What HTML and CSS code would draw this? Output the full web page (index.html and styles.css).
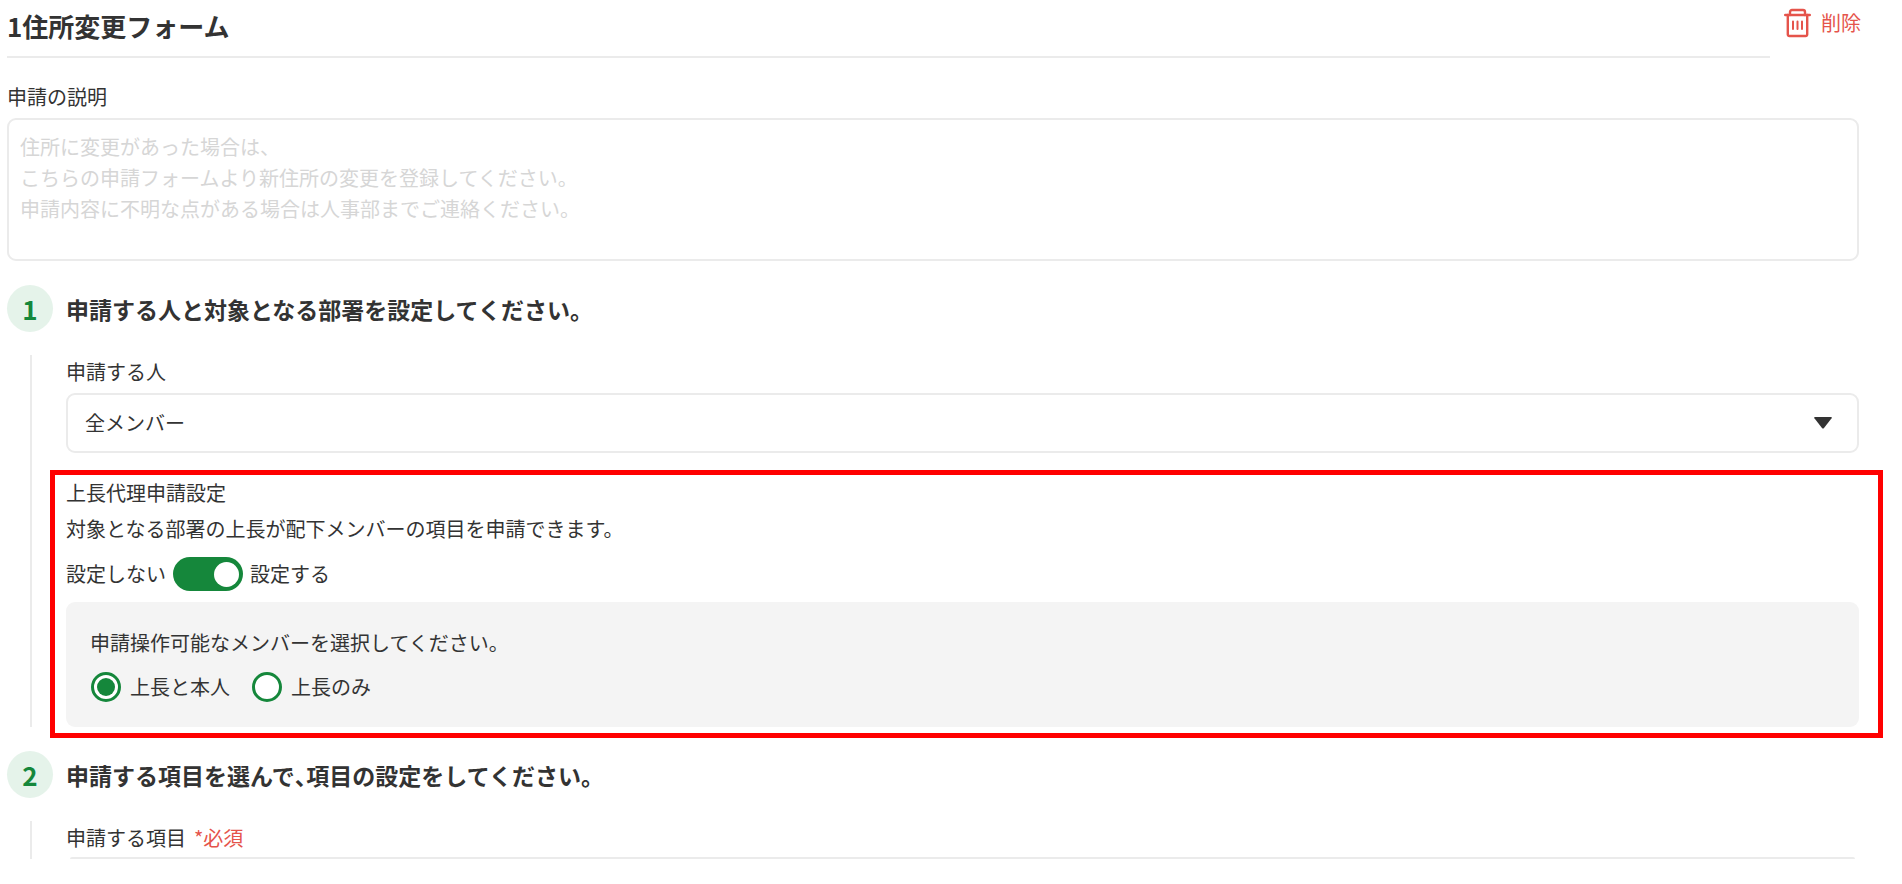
FILE: index.html
```html
<!DOCTYPE html>
<html lang="ja">
<head>
    <meta charset="UTF-8">
    <meta name="viewport" content="width=device-width, initial-scale=1.0">
    <title>住所変更フォーム</title>
    <link rel="stylesheet" href="styles.css">
</head>
<body>
    <main class="form-page">
        <header class="form-header">
            <h1 class="form-title">1住所変更フォーム</h1>
            <button type="button" class="delete-button">
                <svg class="trash-icon" width="27" height="30" viewBox="0 0 27 30" fill="none" stroke="currentColor" stroke-width="2.400" stroke-linecap="round" stroke-linejoin="round" aria-hidden="true">
                    <path d="M1.200 7h24.600"/>
                    <path d="M6 7V4a2 2 0 0 1 2-2h11a2 2 0 0 1 2 2V7"/>
                    <path d="M3.800 7v19.500a1.500 1.500 0 0 0 1.500 1.500h16.400a1.500 1.500 0 0 0 1.500-1.500V7"/>
                    <path d="M9 13.500v7.500M13.500 13.500v7.500M18 13.500v7.500" stroke-width="2"/>
                </svg>
                <span>削除</span>
            </button>
        </header>

        <div class="field">
            <label for="description">申請の説明</label>
            <textarea id="description" class="description" placeholder="住所に変更があった場合は、&#10;こちらの申請フォームより新住所の変更を登録してください。&#10;申請内容に不明な点がある場合は人事部までご連絡ください。"></textarea>
        </div>

        <section class="step">
            <div class="step-header">
                <span class="step-number">1</span>
                <h2>申請する人と対象となる部署を設定してください。</h2>
            </div>
            <div class="step-body">
                <div class="field">
                    <label for="applicant">申請する人</label>
                    <div class="select-wrap">
                        <select id="applicant">
                            <option>全メンバー</option>
                        </select>
                        <svg class="select-arrow" width="18" height="12" viewBox="0 0 18 12" aria-hidden="true">
                            <path d="M1 0h16q1.500 0 .6 1.200L10 11q-1 1.200-2 0L.4 1.200Q-.5 0 1 0z" fill="#333"/>
                        </svg>
                    </div>
                </div>

                <div class="proxy">
                    <p>上長代理申請設定</p>
                    <p>対象となる部署の上長が配下メンバーの項目を申請できます。</p>
                    <div class="toggle-row">
                        <span>設定しない</span>
                        <input type="checkbox" role="switch" id="proxy-switch" class="toggle" checked>
                        <label for="proxy-switch">設定する</label>
                    </div>
                    <fieldset class="members" aria-labelledby="members-title">
                        <p id="members-title">申請操作可能なメンバーを選択してください。</p>
                        <div class="radio-row">
                            <label class="radio"><input type="radio" name="members" checked>上長と本人</label>
                            <label class="radio"><input type="radio" name="members">上長のみ</label>
                        </div>
                    </fieldset>
                </div>
            </div>
        </section>

        <section class="step">
            <div class="step-header">
                <span class="step-number">2</span>
                <h2>申請する項目を選んで<span class="half">、</span>項目の設定をしてください。</h2>
            </div>
            <div class="step-body">
                <p class="items-label"><span>申請する項目</span><span class="required">*必須</span></p>
                <div class="items-top"></div>
            </div>
        </section>
    </main>
</body>
</html>
```

FILE: styles.css
```css
* {
    box-sizing: border-box;
}
body {
    margin: 0;
    font-family: "Noto Sans CJK JP", sans-serif;
    font-size: 20px;
    line-height: 30px;
    color: #333;
    background-color: #fff;
}
h1, h2, p {
    margin: 0;
}
input, select, textarea, button {
    font: inherit;
    color: inherit;
    margin: 0;
}
.form-page {
    padding: 0 43px 0 7px;
}
.form-header {
    display: flex;
    align-items: flex-start;
    gap: 14px;
    margin-bottom: 24px;
}
.form-title {
    flex: 1;
    padding: 11px 0 15px;
    border-bottom: 2px solid #ebebeb;
    font-size: 26px;
    font-weight: 700;
}
.delete-button {
    display: flex;
    align-items: center;
    gap: 10px;
    margin-right: -2px;
    padding: 8px 0 0;
    border: none;
    background: none;
    color: #e5544b;
    cursor: pointer;
}
.field {
    display: flex;
    flex-direction: column;
    gap: 6px;
}
.description {
    display: block;
    width: 100%;
    height: 143px;
    padding: 11px;
    border: 2px solid #ebebeb;
    border-radius: 9px;
    line-height: 31px;
    resize: none;
}
.description::placeholder {
    color: #d6d6d6;
}
.step {
    margin-top: 24px;
}
.step-header {
    display: flex;
    align-items: center;
    gap: 13px;
    margin-bottom: 23px;
}
.step-header h2 {
    font-size: 23px;
    font-weight: 700;
}
.step-number {
    display: flex;
    justify-content: center;
    align-items: center;
    width: 46px;
    height: 47px;
    border-radius: 50%;
    background-color: #e5f3ea;
    color: #15873b;
    font-size: 26px;
    font-weight: 700;
}
.half {
    font-feature-settings: "halt";
}
.step-body {
    margin-left: 23px;
    padding: 2px 0 0 34px;
    border-left: 2px solid #ebebeb;
}
.select-wrap {
    position: relative;
}
.select-wrap select {
    display: block;
    width: 100%;
    height: 60px;
    padding: 0 17px;
    border: 2px solid #ebebeb;
    border-radius: 9px;
    background-color: #fff;
    appearance: none;
}
.select-arrow {
    position: absolute;
    top: 24px;
    right: 27px;
    pointer-events: none;
}
.proxy {
    position: relative;
    display: flex;
    flex-direction: column;
    gap: 6px;
    margin-top: 25px;
}
/* red highlight frame around the proxy settings */
.proxy::after {
    content: "";
    position: absolute;
    inset: -8px -24px -11px -16px;
    border: 5px solid #f00;
    pointer-events: none;
}
.toggle-row {
    display: flex;
    align-items: center;
    gap: 7px;
    margin: 7px 0 5px;
}
.toggle {
    display: flex;
    justify-content: flex-end;
    align-items: center;
    width: 70px;
    height: 34px;
    padding: 0 4px;
    border-radius: 17px;
    background-color: #15873b;
    appearance: none;
    cursor: pointer;
}
.toggle::before {
    content: "";
    width: 25px;
    height: 25px;
    border-radius: 50%;
    background-color: #fff;
}
.toggle:not(:checked) {
    justify-content: flex-start;
    background-color: #ccc;
}
.members {
    margin: 0;
    padding: 26px 24px 25px;
    border: none;
    border-radius: 9px;
    background-color: #f4f4f4;
}
.radio-row {
    display: flex;
    gap: 22px;
    margin-top: 14px;
    padding-left: 1px;
}
.radio {
    display: flex;
    align-items: center;
    gap: 9px;
}
.radio input {
    display: grid;
    place-content: center;
    width: 30px;
    height: 30px;
    border: 3px solid #15873b;
    border-radius: 50%;
    background-color: #fff;
    appearance: none;
}
.radio input:checked::before {
    content: "";
    width: 18px;
    height: 18px;
    border-radius: 50%;
    background-color: #15873b;
}
.items-label {
    display: flex;
    gap: 8px;
}
.required {
    color: #e5544b;
}
.items-top {
    height: 2px;
    margin: 4px 4px 0;
    border-radius: 4px 4px 0 0;
    background-color: #ebebeb;
}
```
